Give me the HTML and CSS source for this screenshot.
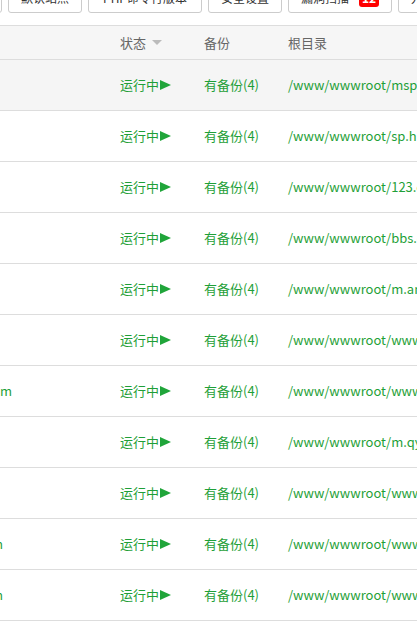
FILE: index.html
```html
<!DOCTYPE html>
<html lang="zh-CN">
<head>
<meta charset="utf-8">
<title>网站</title>
<link rel="stylesheet" href="styles.css">
</head>
<body>
<div class="toolbar">
  <button class="btn btn-lead">添加站点</button>
  <button class="btn">默认站点</button>
  <button class="btn btn-wide">PHP命令行版本</button>
  <button class="btn">安全设置</button>
  <button class="btn">漏洞扫描<span class="badge">12</span></button>
  <button class="btn">九宫格设置</button>
</div>
<div class="table">
  <div class="thead">
    <div class="cell name"></div>
    <div class="cell">状态<span class="sort"></span></div>
    <div class="cell">备份</div>
    <div class="cell">根目录</div>
  </div>
  <div class="row hover">
    <div class="cell name"><span>msp.example.com</span></div>
    <div class="cell">运行中<span class="play"></span></div>
    <div class="cell">有备份(4)</div>
    <div class="cell path">/www/wwwroot/msp.example.com</div>
  </div>
  <div class="row">
    <div class="cell name"><span>sp.h.example.com</span></div>
    <div class="cell">运行中<span class="play"></span></div>
    <div class="cell">有备份(4)</div>
    <div class="cell path">/www/wwwroot/sp.h.example.com</div>
  </div>
  <div class="row">
    <div class="cell name"><span>123.example.com</span></div>
    <div class="cell">运行中<span class="play"></span></div>
    <div class="cell">有备份(4)</div>
    <div class="cell path">/www/wwwroot/123.example.com</div>
  </div>
  <div class="row">
    <div class="cell name"><span>bbs.example.com</span></div>
    <div class="cell">运行中<span class="play"></span></div>
    <div class="cell">有备份(4)</div>
    <div class="cell path">/www/wwwroot/bbs.example.com</div>
  </div>
  <div class="row">
    <div class="cell name"><span>m.am.example.com</span></div>
    <div class="cell">运行中<span class="play"></span></div>
    <div class="cell">有备份(4)</div>
    <div class="cell path">/www/wwwroot/m.am.example.com</div>
  </div>
  <div class="row">
    <div class="cell name"><span>www.example.com</span></div>
    <div class="cell">运行中<span class="play"></span></div>
    <div class="cell">有备份(4)</div>
    <div class="cell path">/www/wwwroot/www.example.com</div>
  </div>
  <div class="row">
    <div class="cell name t13"><span>www.example.com</span></div>
    <div class="cell">运行中<span class="play"></span></div>
    <div class="cell">有备份(4)</div>
    <div class="cell path">/www/wwwroot/www.example.com</div>
  </div>
  <div class="row">
    <div class="cell name"><span>m.qy.example.com</span></div>
    <div class="cell">运行中<span class="play"></span></div>
    <div class="cell">有备份(4)</div>
    <div class="cell path">/www/wwwroot/m.qy.example.com</div>
  </div>
  <div class="row">
    <div class="cell name"><span>www.example.net</span></div>
    <div class="cell">运行中<span class="play"></span></div>
    <div class="cell">有备份(4)</div>
    <div class="cell path">/www/wwwroot/www.example.net</div>
  </div>
  <div class="row">
    <div class="cell name t3"><span>www.example.com</span></div>
    <div class="cell">运行中<span class="play"></span></div>
    <div class="cell">有备份(4)</div>
    <div class="cell path">/www/wwwroot/www.example.com</div>
  </div>
  <div class="row">
    <div class="cell name t3"><span>www.example.com</span></div>
    <div class="cell">运行中<span class="play"></span></div>
    <div class="cell">有备份(4)</div>
    <div class="cell path">/www/wwwroot/www.example.com</div>
  </div>
</div>
</body>
</html>
```
FILE: styles.css
```css
html, body {
  margin: 0;
  padding: 0;
  width: 417px;
  height: 639px;
  overflow: hidden;
  background: #fff;
}
body {
  font-family: "Noto Sans CJK SC", "Open Sans", sans-serif;
  font-size: 13px;
  color: #666;
}
.toolbar {
  display: flex;
  gap: 6px;
  margin-top: -17px;
  margin-left: -72px;
  white-space: nowrap;
}
.btn {
  flex: none;
  display: flex;
  align-items: center;
  height: 30px;
  padding: 0 12px;
  border: 1px solid #ccc;
  border-radius: 3px;
  background: #fff;
  color: #333;
  font-family: "Noto Sans CJK SC", "Open Sans", sans-serif;
  font-size: 12px;
  line-height: 18px;
}
.btn-wide {
  padding: 0 14px;
}
.badge {
  display: inline-block;
  margin-left: 10px;
  min-width: 20px;
  height: 18px;
  line-height: 18px;
  border-radius: 3px;
  background: #f00;
  color: #fff;
  font-weight: bold;
  font-size: 12px;
  text-align: center;
}
.table {
  margin-top: 12px;
  border-top: 1px solid #ddd;
}
.thead, .row {
  display: grid;
  grid-template-columns: 112px 84px 84px 1fr;
  align-items: center;
  border-bottom: 1px solid #ddd;
}
.thead {
  height: 33px;
  background: #f6f6f6;
  color: #666;
}
.row {
  height: 50px;
  color: #1f9f38;
}
.row.hover {
  background: #f5f5f5;
}
.cell {
  padding-left: 8px;
  white-space: nowrap;
  display: flex;
  align-items: center;
  overflow: hidden;
  line-height: 18px;
}
.cell.path {
  overflow: visible;
}
.cell.name {
  padding-left: 0;
  justify-content: flex-end;
}
.cell.name span {
  flex: none;
  margin-right: 130px;
}
.cell.name.t13 span { margin-right: 100px; }
.cell.name.t3 span { margin-right: 109px; }
.sort {
  display: inline-block;
  margin-left: 6px;
  width: 0;
  height: 0;
  border-left: 5px solid transparent;
  border-right: 5px solid transparent;
  border-top: 5px solid #bbb;
}
.play {
  display: inline-block;
  margin-left: 1px;
  width: 0;
  height: 0;
  border-top: 5.5px solid transparent;
  border-bottom: 5.5px solid transparent;
  border-left: 11px solid #20a53a;
}
```
